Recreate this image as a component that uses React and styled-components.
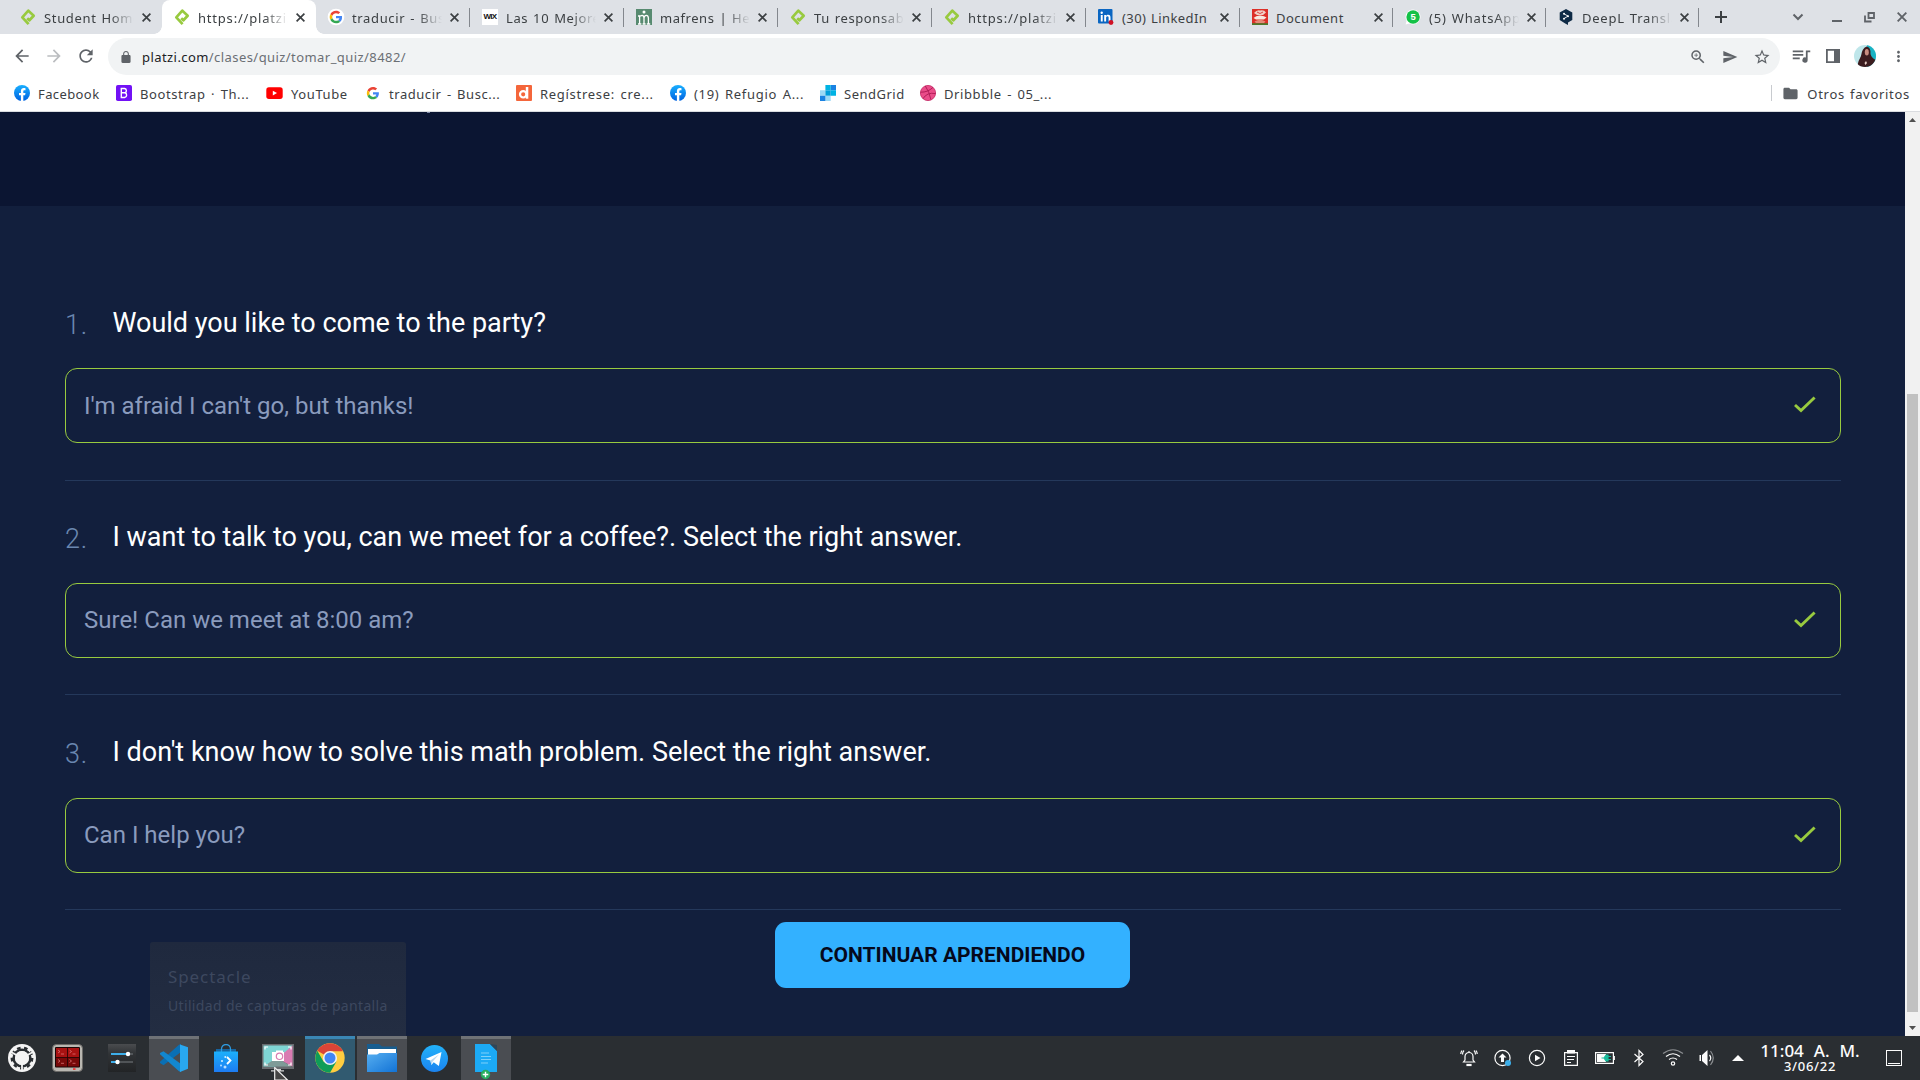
import React from "react";
import styled, { createGlobalStyle, css } from "styled-components";

const UI = '"Noto Sans", "Open Sans", sans-serif';

const Global = createGlobalStyle`
  * { box-sizing: border-box; }
  html, body { margin: 0; padding: 0; background: #121f3d; overflow: hidden; }
  body { font-family: Roboto, sans-serif; }
  svg { display: block; flex: none; }
  button { font: inherit; border: 0; padding: 0; background: none; color: inherit; }
`;

const Screen = styled.div`
  width: 1920px;
  height: 1080px;
  display: flex;
  flex-direction: column;
  overflow: hidden;
`;

/* ---------- browser chrome ---------- */
const TabStrip = styled.header`
  height: 34px;
  flex: none;
  background: #dee1e6;
  display: flex;
  padding-left: 8px;
  color: #3c4043;
`;

const Tab = styled.div`
  width: ${(p) => p.$w}px;
  height: 34px;
  flex: none;
  display: flex;
  align-items: center;
  padding: 0 0 0 12px;
  position: relative;
  font: 13px/20px ${UI};
  ${(p) => p.$line && css`
    &::after {
      content: "";
      position: absolute;
      right: 0;
      top: 8px;
      width: 1px;
      height: 19px;
      background: #83878d;
    }
  `}
  ${(p) => p.$active && css`
    background: #fff;
    border-radius: 8px 8px 0 0;
    &::before, &::after {
      content: "";
      position: absolute;
      bottom: 0;
      width: 8px;
      height: 8px;
    }
    &::before { left: -8px; background: radial-gradient(circle at 0 0, transparent 7.5px, #fff 8px); }
    &::after { right: -8px; background: radial-gradient(circle at 100% 0, transparent 7.5px, #fff 8px); }
  `}
`;

const TabTitle = styled.span`
  width: 90px;
  margin: 1px 0 0 8px;
  overflow: hidden;
  white-space: nowrap;
  letter-spacing: ${(p) => p.$ls}px;
  word-spacing: 1px;
  mask-image: ${(p) => (p.$fade ? "linear-gradient(90deg, #000 66px, transparent 90px)" : "none")};
`;

const TabClose = styled.button`
  width: 16px;
  height: 16px;
  margin-left: 4px;
  display: grid;
  place-items: center;
`;

const NewTab = styled.button`
  width: 44px;
  display: grid;
  place-items: center;
`;

const WindowButtons = styled.div`
  margin-left: auto;
  display: flex;
  align-items: center;
  padding-right: 13px;
  gap: 22px;
  color: #5f6368;
`;

const ChevronSlot = styled.div`
  padding-right: 6px;
`;

const Toolbar = styled.div`
  height: 44px;
  flex: none;
  background: #fff;
  display: flex;
  align-items: center;
  padding: 0 0 0 12px;
  color: #5f6368;
`;

const NavButtons = styled.div`
  width: 96px;
  display: flex;
  gap: 12px;
`;

const Address = styled.div`
  width: 1672px;
  height: 37px;
  border-radius: 19px;
  background: #f1f3f4;
  display: flex;
  align-items: center;
  padding: 0 9px 0 11px;
  margin-top: 1px;
`;

const Url = styled.span`
  font: 13px/20px ${UI};
  letter-spacing: 0.43px;
  margin: 1px auto 0 9px;
  color: #6b6f74;
  b { font-weight: 400; color: #202124; }
`;

const AddressIcons = styled.div`
  display: flex;
  align-items: center;
  gap: 15px;
`;

const ToolbarIcons = styled.div`
  margin-left: 11px;
  display: flex;
  align-items: center;
  gap: 14px;
`;

const Bookmarks = styled.nav`
  height: 34px;
  flex: none;
  background: #fff;
  border-bottom: 1px solid #dadce0;
  display: flex;
  align-items: center;
  padding: 0 10px 3px 14px;
  font: 13px/20px ${UI};
  color: #3c4043;
`;

const Bookmark = styled.a`
  width: ${(p) => p.$w}px;
  flex: none;
  display: flex;
  align-items: center;
  gap: 8px;
  white-space: nowrap;
  span { letter-spacing: ${(p) => p.$ls}px; word-spacing: 1.5px; padding-top: 2px; }
`;

const OtherBookmarks = styled.a`
  margin-left: auto;
  height: 16px;
  border-left: 1px solid #c8cbcf;
  padding-left: 10px;
  display: flex;
  align-items: center;
  gap: 8px;
  letter-spacing: 0.7px;
  word-spacing: 1px;
  white-space: nowrap;
  span { padding-top: 2px; }
`;

/* ---------- page ---------- */
const Viewport = styled.div`
  height: 924px;
  flex: none;
  display: flex;
`;

const Page = styled.main`
  width: 1905px;
  background: #121f3d;
  position: relative;
`;

const Hero = styled.div`
  height: 94px;
  background: #0b1532;
  padding-left: 427px;
  &::before {
    content: "";
    display: block;
    width: 3px;
    height: 1px;
    background: #7f8aa8;
  }
`;

const Questions = styled.section`
  padding: 83.4px 64px 0 65px;
`;

const Question = styled.article`
  height: 214.6px;
`;

const QuestionHead = styled.div`
  display: flex;
  height: 79px;
  padding-top: 15.5px;
`;

const Num = styled.span`
  width: 47.500px;
  padding-top: 2px;
  font: 300 27px/36px Roboto, sans-serif;
  letter-spacing: 0.7px;
  color: #6a87b0;
`;

const QuestionTitle = styled.h2`
  margin: 0;
  font: 400 27px/36px Roboto, sans-serif;
  letter-spacing: -0.01px;
  color: #fff;
`;

const Answer = styled.div`
  height: 75px;
  border: 1px solid #98ca3f;
  border-radius: 12px;
  display: flex;
  align-items: center;
  justify-content: space-between;
  padding: 0 24px 0 18px;
  font: 400 24px/32px Roboto, sans-serif;
  color: #8a9bbd;
  svg { margin-bottom: 2px; }
`;

const Divider = styled.div`
  height: 1px;
  margin-top: 36.300px;
  background: #24385b;
`;

const Continue = styled.button`
  display: block;
  width: 355px;
  height: 66px;
  margin: -11px 0 0 710px;
  border-radius: 11px;
  background: #33b1ff;
  color: #05091c;
  font: 700 21px/66px Roboto, sans-serif;
  text-align: center;
`;

const Tooltip = styled.aside`
  position: absolute;
  left: 150px;
  bottom: 0;
  width: 256px;
  height: 94px;
  border-radius: 3px 3px 0 0;
  padding: 23px 0 0 18px;
  background: linear-gradient(#1f293e, #232d42);
  color: #3d485f;
  font-family: ${UI};
  strong { display: block; font-weight: 400; font-size: 17px; line-height: 24px; letter-spacing: 0.9px; }
  span { display: block; font-size: 14px; line-height: 20px; margin-top: 7px; letter-spacing: 0.34px; white-space: nowrap; }
`;

const Scrollbar = styled.div`
  width: 15px;
  background: #f1f1f1;
  display: flex;
  flex-direction: column;
  align-items: center;
  justify-content: space-between;
  padding: 6px 0 6px;
`;

const Thumb = styled.div`
  width: 11px;
  height: 618px;
  margin: 272px 0 auto;
  background: #c1c1c1;
`;

/* ---------- desktop panel ---------- */
const Panel = styled.footer`
  height: 44px;
  flex: none;
  background: #2a2e32;
  display: flex;
  color: #fcfcfc;
`;

const Launchers = styled.div`
  display: flex;
  width: 149px;
  align-items: center;
  padding-left: 8px;
`;

const LauncherSlot = styled.div`
  width: ${(p) => p.$w}px;
`;

const Tasks = styled.div`
  display: flex;
  gap: 2px;
`;

const Task = styled.div`
  width: 50px;
  height: 44px;
  display: grid;
  place-items: center;
  border-top: 3px solid ${(p) => (p.$state === "active" ? "#3a86b4" : p.$state === "open" ? "#6f7276" : "transparent")};
  background: ${(p) => (p.$state === "active" ? "#315a70" : p.$state === "open" ? "#4a4d52" : "transparent")};
  padding-bottom: 3px;
`;

const Tray = styled.div`
  margin-left: auto;
  display: flex;
  align-items: center;
`;

const TrayIcon = styled.div`
  width: ${(p) => p.$w || 34}px;
  display: grid;
  place-items: center;
`;

const Clock = styled.div`
  width: 116px;
  height: 44px;
  padding-top: 4px;
  text-align: center;
  font: 500 17px/22px ${UI};
  word-spacing: 5.5px;
  white-space: pre;
`;

const ClockDate = styled.div`
  font-size: 13px;
  line-height: 9px;
  letter-spacing: 0.7px;
`;

const ShowDesktop = styled.div`
  width: 16px;
  height: 16px;
  margin: 0 18px 0 18px;
  border: 1px solid #fcfcfc;
  display: flex;
  align-items: flex-end;
  padding: 1px;
  &::after { content: ""; width: 100%; height: 1px; background: #fcfcfc; }
`;

/* ---------- icons ---------- */
const Platzi = () => (
  <svg width="16" height="18" viewBox="0 0 16 18" fill="none" stroke="#98ca3f" strokeWidth="2.700" strokeLinejoin="round">
    <path d="M8.600 16.200L2.300 9.300 8.300 2.600 13.700 7.800 9.400 12.300 7.200 10.200" />
  </svg>
);
const Google = ({ s = 16, plate }) => (
  <svg width={s} height={s} viewBox="0 0 48 48" overflow="visible">
    {plate && <circle cx="24" cy="24" r="25" fill="#fff" />}
    <g transform={plate ? "translate(5 5) scale(.79)" : "translate(5.500 6) scale(.77)"}>
      <path fill="#EA4335" d="M24 9.5c3.54 0 6.71 1.22 9.21 3.6l6.85-6.85C35.9 2.38 30.47 0 24 0 14.62 0 6.51 5.38 2.56 13.22l7.98 6.19C12.43 13.72 17.74 9.5 24 9.5z" />
      <path fill="#4285F4" d="M46.98 24.55c0-1.57-.15-3.09-.38-4.55H24v9.02h12.94c-.58 2.96-2.26 5.48-4.78 7.18l7.73 6c4.51-4.18 7.09-10.36 7.09-17.65z" />
      <path fill="#FBBC05" d="M10.53 28.59c-.48-1.45-.76-2.99-.76-4.59s.27-3.14.76-4.59l-7.98-6.19C.92 16.46 0 20.12 0 24s.92 7.54 2.56 10.78l7.97-6.19z" />
      <path fill="#34A853" d="M24 48c6.48 0 11.93-2.13 15.89-5.81l-7.73-6c-2.15 1.45-4.92 2.3-8.16 2.3-6.26 0-11.57-4.22-13.47-9.91l-7.98 6.19C6.51 42.62 14.62 48 24 48z" />
    </g>
  </svg>
);
const WixBox = styled.span`
  width: 16px;
  height: 16px;
  background: #fff;
  color: #111;
  font: 700 8px/16px "Liberation Sans", sans-serif;
  letter-spacing: -0.7px;
  text-align: center;
`;
const Mafrens = () => (
  <svg width="16" height="16" viewBox="0 0 16 16">
    <rect width="16" height="16" fill="#578a70" />
    <circle cx="8" cy="3" r="1.5" fill="#fff" />
    <path d="M2 15h3.400M6.600 15h3M10.800 15h3.400M3.600 15V7M2 7h2l2-.6Q8 6.600 8 9v6M8 9q.5-2.600 2.300-2.600T12.400 9v6" fill="none" stroke="#fff" strokeWidth="1.300" />
  </svg>
);
const LinkedIn = () => (
  <svg width="16" height="16" viewBox="0 0 16 16">
    <rect width="14.5" height="14.5" rx="1" fill="#0a66c2" />
    <circle cx="3.7" cy="3.8" r="1.2" fill="#fff" />
    <path d="M2.800 6h1.900v6.400H2.800zM6.200 6H8v.9c.4-.7 1.200-1.100 2.100-1.100 1.900 0 2.400 1.200 2.400 2.900v3.700h-1.900V9c0-.9-.1-1.700-1.100-1.700S8.100 8 8.100 9v3.400H6.200z" fill="#fff" />
    <circle cx="13" cy="13.500" r="2.400" fill="#d11124" />
  </svg>
);
const DocumentFav = () => (
  <svg width="16" height="16" viewBox="0 0 16 16">
    <rect width="16" height="16" fill="#dc2f28" />
    <path d="M2 4q3-3.500 6-2.500 4-1 6 2L11 6H5z" fill="#f0cfc4" />
    <path d="M5 3l3 1.500L11 3" stroke="#d44" fill="none" />
    <path d="M1.500 9q3-3 7-2.500t6 2L12 10.500H4z" fill="#f7e9e0" />
    <path d="M2.500 12.500q5.500-3.500 11 0L12 14H4z" fill="#e58a78" />
    <path d="M0 14.200h16V16H0z" fill="#4d7a2c" />
  </svg>
);
const WhatsApp = () => (
  <svg width="16" height="16" viewBox="0 0 16 16">
    <path d="M8 .5a7.500 7.500 0 1 1-3.600 14.100L.6 15.500l1-3.700A7.500 7.500 0 0 1 8 .5z" fill="#fff" />
    <circle cx="8.100" cy="8" r="6.700" fill="#13c147" />
    <text x="8.100" y="11.400" fontSize="9.500" fontWeight="700" fill="#fff" textAnchor="middle" fontFamily="Liberation Sans, sans-serif">5</text>
  </svg>
);
const DeepL = () => (
  <svg width="16" height="16" viewBox="0 0 16 16">
    <path d="M8 0l6.300 3.500v7.600L10 13.600V16l-2.800-1.600L1.700 11.100V3.500z" fill="#0f2b46" />
    <path d="M6 4.800l4 2.300-4 2.500" fill="none" stroke="#fff" strokeWidth=".9" />
    <circle cx="6" cy="4.800" r="1" fill="#fff" /><circle cx="10" cy="7.200" r="1" fill="#fff" /><circle cx="6" cy="9.700" r="1" fill="#fff" />
  </svg>
);
const Facebook = () => (
  <svg width="16" height="16" viewBox="0 0 16 16">
    <defs><linearGradient id="fbg" x2="0" y2="1"><stop stopColor="#19afff" /><stop offset="1" stopColor="#0062e0" /></linearGradient></defs>
    <circle cx="8" cy="8" r="8" fill="url(#fbg)" />
    <path d="M11.100 10.300l.4-2.300H9.300V6.500c0-.7.3-1.200 1.200-1.200h1V3.200c-.5-.1-1.100-.2-1.700-.2C8.100 3 6.900 4.100 6.900 6.100V8H5v2.300h1.900v5.600a8 8 0 0 0 2.400 0v-5.600z" fill="#fff" />
  </svg>
);
const Bootstrap = () => (
  <svg width="16" height="16" viewBox="0 0 16 16">
    <rect width="16" height="16" rx="1.800" fill="#7211f5" />
    <path d="M5.300 3.500h3.200a2.200 2.200 0 0 1 .3 4.300 2.400 2.400 0 0 1-.2 4.700H5.300zM5.300 7.800h3.500" fill="none" stroke="#fff" strokeWidth="1.400" />
  </svg>
);
const YouTube = () => (
  <svg width="17" height="16" viewBox="0 0 17 16">
    <rect x=".3" y="2.300" width="16.400" height="11.600" rx="2.600" fill="#f00" /><path d="M6.800 5.700v4.800L11 8.100z" fill="#fff" />
  </svg>
);
const Dfav = () => (
  <svg width="16" height="16" viewBox="0 0 16 16">
    <rect width="16" height="16" rx="1" fill="#f4663b" />
    <circle cx="7.200" cy="9.300" r="3.200" fill="none" stroke="#fff" strokeWidth="2.200" /><path d="M9.800 2h2.500v11.700H9.800z" fill="#fff" />
  </svg>
);
const SendGrid = () => (
  <svg width="16" height="16" viewBox="0 0 16 16">
    <path d="M0 5.300h5.400v5.400H0zM5.400 10.700h5.300V16H5.400z" fill="#9dd9f5" />
    <path d="M0 10.700h5.400V16H0zM10.700 0H16v5.300h-5.300z" fill="#1a82e2" />
    <path d="M5.400 0h5.300v5.300H5.400zM10.700 5.300H16v5.400h-5.300z" fill="#00b3e3" />
    <path d="M5.400 5.300h5.300v5.400H5.400z" fill="#009dd9" />
  </svg>
);
const Dribbble = () => (
  <svg width="16" height="16" viewBox="0 0 16 16">
    <circle cx="8" cy="8" r="7.600" fill="#ea4c89" stroke="#c32361" strokeWidth=".8" />
    <path d="M5.300 1q4 5.500 5.600 13.600M.5 7.200Q8 7.400 13 2.300M3 13.700Q7 6.900 15.600 8.600" fill="none" stroke="#b21e58" strokeWidth="1" />
  </svg>
);
const Material = ({ d, s = 20, c = "#5f6368" }) => (
  <svg width={s} height={s} viewBox="0 0 24 24" fill={c}><path d={d} /></svg>
);
const M = {
  back: "M20 11H7.830l5.590-5.590L12 4l-8 8 8 8 1.410-1.410L7.830 13H20v-2z",
  fwd: "M12 4l-1.410 1.410L16.170 11H4v2h12.170l-5.580 5.590L12 20l8-8z",
  reload: "M17.650 6.350A7.958 7.958 0 0 0 12 4c-4.420 0-7.990 3.580-7.990 8s3.570 8 7.990 8c3.730 0 6.840-2.550 7.730-6h-2.080A5.990 5.990 0 0 1 12 18c-3.310 0-6-2.690-6-6s2.690-6 6-6c1.660 0 3.140.69 4.220 1.780L13 11h7V4l-2.350 2.350z",
  lock: "M18 8h-1V6c0-2.760-2.240-5-5-5S7 3.240 7 6v2H6c-1.100 0-2 .9-2 2v10c0 1.100.9 2 2 2h12c1.100 0 2-.9 2-2V10c0-1.100-.9-2-2-2zM8.900 6c0-1.710 1.390-3.100 3.100-3.100s3.100 1.390 3.100 3.100v2H8.900V6z",
  zoom: "M15.500 14h-.79l-.28-.27A6.471 6.471 0 0 0 16 9.500 6.500 6.500 0 1 0 9.500 16c1.610 0 3.090-.59 4.230-1.570l.27.28v.79l5 4.990L20.490 19l-4.990-5zm-6 0C7.010 14 5 11.990 5 9.500S7.010 5 9.500 5 14 7.010 14 9.500 11.990 14 9.500 14zm.5-7H9v2H7v1h2v2h1v-2h2V9h-2z",
  send: "M2.010 21L23 12 2.010 3 2 10l15 2-15 2z",
  star: "M22 9.240l-7.190-.62L12 2 9.190 8.630 2 9.240l5.460 4.730L5.820 21 12 17.270 18.180 21l-1.630-7.030L22 9.240zM12 15.400l-3.760 2.270 1-4.280-3.320-2.880 4.380-.38L12 6.100l1.710 4.040 4.380.38-3.320 2.880 1 4.280L12 15.400z",
  media: "M2 5h12v2H2zM2 9h12v2H2zM2 13h8v2H2zM17 5h5v2.200h-3V16a3 3 0 1 1-2-2.800z",
  folder: "M10 4H4c-1.100 0-1.990.9-1.990 2L2 18c0 1.100.9 2 2 2h16c1.100 0 2-.9 2-2V8c0-1.100-.9-2-2-2h-8l-2-2z",
  more: "M12 8c1.100 0 2-.9 2-2s-.9-2-2-2-2 .9-2 2 .9 2 2 2zm0 2c-1.100 0-2 .9-2 2s.9 2 2 2 2-.9 2-2-.9-2-2-2zm0 6c-1.100 0-2 .9-2 2s.9 2 2 2 2-.9 2-2-.9-2-2-2z",
};
const Cross = ({ s = 9, c = "#3c4043" }) => (
  <svg width={s} height={s} viewBox="0 0 9 9" stroke={c} strokeWidth="1.700"><path d="M.6.6l7.800 7.800M8.400.6L.6 8.400" /></svg>
);
const Avatar = () => (
  <svg width="22" height="22" viewBox="0 0 22 22">
    <clipPath id="av"><circle cx="11" cy="11" r="11" /></clipPath>
    <g clipPath="url(#av)">
      <rect width="22" height="22" fill="#bfe6ea" /><rect x="13" width="9" height="22" fill="#19b3c4" />
      <path d="M3 22Q4 16 7 11 8 3 12.500 1.500 17 2 16.500 9q1 4 5.500 6v7z" fill="#3c1c1f" />
      <ellipse cx="12.800" cy="7.200" rx="2" ry="3.300" fill="#c98d80" />
      <path d="M10.500 18l1.500-2 1 2-1.500 2z" fill="#e8cfc6" />
    </g>
  </svg>
);
const Check = () => (
  <svg width="22" height="17" viewBox="0 0 22 17" fill="none" stroke="#98ca3f" strokeWidth="2.900"><path d="M1 9l6 5.600L20.600 1.500" /></svg>
);

const Kubuntu = () => (
  <svg width="28" height="28" viewBox="0 0 28 28">
    <circle cx="14" cy="14" r="14" fill="#f4f4f4" />
    <circle cx="14" cy="14" r="8.300" fill="none" stroke="#2a2e32" strokeWidth="2.600" />
    <circle cx="14" cy="14" r="10.200" fill="none" stroke="#2a2e32" strokeWidth="2.400" strokeDasharray="3.600 3.520" />
    <path d="M14 14L25 8M14 14L14 26.500M14 14L3 8" stroke="#f4f4f4" strokeWidth="1.800" />
    <circle cx="14" cy="14" r="7" fill="#f4f4f4" />
  </svg>
);
const Terminal = () => (
  <svg width="31" height="28" viewBox="0 0 31 28">
    <rect x=".5" y=".5" width="30" height="27" rx="4" fill="#b9b7b1" stroke="#6c6b68" />
    <rect x="3" y="3" width="25" height="20.500" rx="1" fill="#1c0606" />
    <path d="M4 4h11v9H4zM15.800 4H27v9H15.800z" fill="#a81212" />
    <path d="M4 13.800h11v8.700H4zM15.800 13.800H27v8.700H15.800z" fill="#780909" />
    <path d="M6 6l2 1.500L6 9m3 1h3M17.500 6l2 1.500-2 1.500m3 1h3M6 15.500L8 17l-2 1.500m3 .8h3M17.500 15.500l2 1.500-2 1.500m3 .8h3" stroke="#e58080" fill="none" strokeWidth=".7" />
    <rect x="21" y="24.300" width="2.500" height="1.500" fill="#f22" />
  </svg>
);
const Mixer = () => (
  <svg width="28" height="28" viewBox="0 0 28 28">
    <defs><linearGradient id="mx" x2="0" y2="1"><stop stopColor="#4a4c4f" /><stop offset=".35" stopColor="#303336" /><stop offset="1" stopColor="#222426" /></linearGradient></defs>
    <rect width="28" height="28" fill="url(#mx)" />
    <path d="M3 10h17M3 18h6" stroke="#3daee9" strokeWidth="1.800" /><path d="M21 10h4M11 18h14" stroke="#5e6265" strokeWidth="1.500" />
    <circle cx="20" cy="10" r="2.200" fill="#fff" /><circle cx="9.500" cy="18" r="2.200" fill="#fff" />
  </svg>
);
const VSCode = () => (
  <svg width="28" height="28" viewBox="0 0 28 28">
    <path d="M21 0v8L3.500 21.200 0 19v-1.200L19 .8z" fill="#0a6fb4" />
    <path d="M21 28v-8L3.500 7.200 0 9v1.200L19 27.300z" fill="#1287cf" />
    <path d="M20 .500L28 3.200v21.600L20 28z" fill="#29a8f0" />
  </svg>
);
const Discover = () => (
  <svg width="24" height="28" viewBox="0 0 24 28">
    <defs><linearGradient id="ds" x2="0" y2="1"><stop stopColor="#1cb0fb" /><stop offset="1" stopColor="#1d7cf3" /></linearGradient></defs>
    <path d="M2 5h20v3H2z" fill="#1765a0" />
    <path d="M7.500 9V5a4.500 4.500 0 0 1 9 0v4" fill="none" stroke="#2e9ade" strokeWidth="1.300" />
    <rect y="7.500" width="24" height="20.500" fill="url(#ds)" />
    <path d="M13 13l3.500 3.500L13 20" fill="none" stroke="#fff" strokeWidth="1.800" />
    <circle cx="8" cy="17" r="1" fill="#d9efff" /><circle cx="7" cy="21.500" r="1" fill="#b9deff" /><circle cx="11" cy="23" r="1.500" fill="#b9deff" /><circle cx="11.300" cy="13" r="1" fill="#d9efff" />
  </svg>
);
const Spectacle = () => (
  <svg width="32" height="28" viewBox="0 0 32 28">
    <rect width="32" height="25" fill="#686c70" />
    <path d="M1.500 1.500h29L13 22.500H1.500z" fill="#7fd5d4" />
    <path d="M30.500 1.500v21l-15-8z" fill="#d97bb2" /><path d="M1.500 22.500L15 13.500l14 9z" fill="#7f9b98" />
    <path d="M3 5.500V3h3M26 3h3v2.500M3 18.500V21h3M26 21h3v-2.500" stroke="#fff" strokeWidth="1.200" fill="none" />
    <path d="M10 8h4v-1.500h7V8h1v9H10z" fill="#fff" /><circle cx="17.500" cy="12.300" r="3.200" fill="#fff" stroke="#d97bb2" strokeWidth="1.200" />
    <path d="M13 25h6v1.200h3v1.300H9v-1.300h4z" fill="#d4d5d6" />
  </svg>
);
const Chrome = () => (
  <svg width="30" height="30" viewBox="0 0 48 48">
    <circle cx="24" cy="24" r="23.500" fill="#ffcd40" />
    <path d="M24 24L3.650 12.250A23.500 23.500 0 0 1 44.350 12.250L44.350 13H24z" fill="#db4437" />
    <path d="M3.650 12.250A23.500 23.500 0 0 0 24 47.500l10.200-17.700L24 24 13.800 29.900z" fill="#0f9d58" />
    <circle cx="24" cy="24" r="11.300" fill="#f1f1f1" /><circle cx="24" cy="24" r="8.800" fill="#4285f4" />
  </svg>
);
const FolderBig = () => (
  <svg width="30" height="28" viewBox="0 0 30 28">
    <defs><linearGradient id="fo" x2="1" y2="1"><stop stopColor="#56aef0" /><stop offset="1" stopColor="#1273d6" /></linearGradient></defs>
    <path d="M0 0h12l3 2.500h15V12H0z" fill="#175d8f" /><path d="M1 5h28v8H1z" fill="#fff" />
    <path d="M0 10.500h10l2.500-1.500H30v19H0z" fill="url(#fo)" />
  </svg>
);
const Telegram = () => (
  <svg width="27" height="27" viewBox="0 0 27 27">
    <defs><linearGradient id="tg" x2="0" y2="1"><stop stopColor="#22b2fa" /><stop offset="1" stopColor="#1b83ef" /></linearGradient></defs>
    <circle cx="13.500" cy="13.500" r="13.500" fill="url(#tg)" />
    <path d="M4.500 14L20.500 7l-2.600 14-5.200-3.800-2.300 2.800-1-4.500z" fill="#fff" /><path d="M9.400 15.500L18 9.500l-6.500 7.300-1.100 3.200z" fill="#b9d6ee" />
  </svg>
);
const DocNew = () => (
  <svg width="22" height="28" viewBox="0 0 22 28" overflow="visible">
    <path d="M0 0h15l7 7v21H0z" fill="#1caaf5" /><path d="M15 0l7 7V1z" fill="#2f4658" />
    <path d="M6 9h8M6 12.500h10M6 15.500h10M6 19h7" stroke="#7dd0fa" strokeWidth="1" />
    <circle cx="10.500" cy="30.500" r="4.700" fill="#27ae60" /><path d="M10.500 27.700v5.600M7.700 30.500h5.600" stroke="#fff" strokeWidth="1.400" />
  </svg>
);

const Line = ({ w = 18, h = 18, children }) => (
  <svg width={w} height={h} viewBox={`0 0 ${w} ${h}`} fill="none" stroke="#fcfcfc" strokeWidth="1.200">{children}</svg>
);
const trayIcons = [
  <Line><path d="M3.500 13h11l-1.500-2V7.500a4 4 0 0 0-8 0V11zM9 3.500V2M4 1.500Q2.500 3 2.500 5.500M14 1.500q1.500 1.500 1.500 4M2 1.500Q.8 3 .8 5M16 1.500q1.200 1.500 1.200 3.500" /><path d="M7 15.500h4v1H7z" fill="#fcfcfc" /></Line>,
  <Line><circle cx="8.500" cy="9" r="7.600" /><path d="M8.500 4.500l4 4H10v4.500H7V8.500H4.500z" fill="#fcfcfc" stroke="none" /><circle cx="14" cy="14" r="3" fill="#3daee9" stroke="none" /></Line>,
  <Line><circle cx="9" cy="9" r="7.600" /><path d="M7 5.800v6.400L12.500 9z" fill="#fcfcfc" stroke="none" /></Line>,
  <Line><path d="M2.600 3.600h12.800v12.800H2.600zM5 7.500h8M5 10.500h7M5 13.500h4" /><path d="M5 1h8v3.500H5z" fill="#fcfcfc" stroke="none" /></Line>,
  <Line w={20}><path d="M.6 3.600h17.800v10.800H.6zM19.300 7v4" /><path d="M2 5h9v8H2z" fill="#fcfcfc" stroke="none" /><path d="M6.500 9H9l2-3h2v6h-2L9 9M13 7.500h3M13 10.500h3" stroke="#1abc9c" fill="#1abc9c" /></Line>,
  <Line><path d="M4.500 5l8.500 7.500L9 16.500v-15L13 5.500 4.500 13" /></Line>,
  <Line w={22}><circle cx="11" cy="14.500" r="1.700" /><path d="M7 10.500q4-3 8 0M4 7.500q7-5.500 14 0" /><path d="M1 4.500q10-7.500 20 0" stroke="#8a8d90" /></Line>,
  <Line><path d="M1.500 6H3v6H1.500zM4 6L9.500 1v16L4 12z" fill="#fcfcfc" stroke="none" /><path d="M11.500 6q2.500 3 0 6" /><path d="M12.500 2q5.500 7 0 14" stroke="#8a8d90" /></Line>,
];

/* ---------- data ---------- */
const tabs = [
  { icon: <Platzi />, title: "Student Home", ls: 0.65, fade: true },
  { icon: <Platzi />, title: "https://platzi.com", ls: 0.8, fade: true, active: true },
  { icon: <Google plate />, title: "traducir - Buscar", ls: 0.65, fade: true, line: true },
  { icon: <WixBox>WIX</WixBox>, title: "Las 10 Mejores", ls: 0.6, fade: true, line: true },
  { icon: <Mafrens />, title: "mafrens | Health", ls: 0.55, fade: true, line: true },
  { icon: <Platzi />, title: "Tu responsabilidad", ls: 0.6, fade: true, line: true },
  { icon: <Platzi />, title: "https://platzi.com", ls: 0.8, fade: true, line: true },
  { icon: <LinkedIn />, title: "(30) LinkedIn", ls: 0.4, line: true },
  { icon: <DocumentFav />, title: "Document", ls: 0.5, line: true, w: 153 },
  { icon: <WhatsApp />, title: "(5) WhatsApp", ls: 0.8, fade: true, line: true, w: 153 },
  { icon: <DeepL />, title: "DeepL Translate", ls: 0.75, fade: true, line: true, w: 153 },
];

const bookmarks = [
  { icon: <Facebook />, label: "Facebook", w: 102, ls: 0.4 },
  { icon: <Bootstrap />, label: "Bootstrap · Th...", w: 150, ls: 0.6 },
  { icon: <YouTube />, label: "YouTube", w: 99, ls: 0.6 },
  { icon: <Google />, label: "traducir - Busc...", w: 151, ls: 0.55 },
  { icon: <Dfav />, label: "Regístrese: cre...", w: 154, ls: 0.7 },
  { icon: <Facebook />, label: "(19) Refugio A...", w: 150, ls: 0.7 },
  { icon: <SendGrid />, label: "SendGrid", w: 100, ls: 0.5 },
  { icon: <Dribbble />, label: "Dribbble - 05_...", w: 150, ls: 0.6 },
];

const questions = [
  { title: "Would you like to come to the party?", answer: "I'm afraid I can't go, but thanks!" },
  { title: "I want to talk to you, can we meet for a coffee?. Select the right answer.", answer: "Sure! Can we meet at 8:00 am?" },
  { title: "I don't know how to solve this math problem. Select the right answer.", answer: "Can I help you?" },
];

const tasks = [
  { icon: <VSCode />, state: "open" },
  { icon: <Discover /> },
  { icon: <Spectacle /> },
  { icon: <Chrome />, state: "active" },
  { icon: <FolderBig />, state: "open" },
  { icon: <Telegram /> },
  { icon: <DocNew />, state: "open" },
];

const Cursor = styled.svg`
  position: absolute;
  left: 274px;
  top: 1067px;
`;

export default function App() {
  return (
    <Screen>
      <Global />
      <TabStrip>
        {tabs.map((t, i) => (
          <Tab key={i} $active={t.active} $line={t.line} $w={t.w || 154}>
            {t.icon}
            <TabTitle $ls={t.ls} $fade={t.fade}>{t.title}</TabTitle>
            <TabClose><Cross /></TabClose>
          </Tab>
        ))}
        <NewTab><svg width="12" height="12" viewBox="0 0 12 12" stroke="#3c4043" strokeWidth="2"><path d="M6 0v12M0 6h12" /></svg></NewTab>
        <WindowButtons>
          <ChevronSlot>
            <svg width="12" height="8" viewBox="0 0 12 8" fill="none" stroke="#5f6368" strokeWidth="2"><path d="M1.500 1.500L6 6l4.500-4.500" /></svg>
          </ChevronSlot>
          <svg width="10" height="10" viewBox="0 0 10 10"><path d="M0 8h10v2H0z" fill="#5f6368" /></svg>
          <svg width="11" height="11" viewBox="0 0 11 11" fill="none" stroke="#5f6368" strokeWidth="1.800"><path d="M4.500 1H10v5H4.500zM1 3.500v6h6.500" /></svg>
          <Cross s={10} c="#5f6368" />
        </WindowButtons>
      </TabStrip>

      <Toolbar>
        <NavButtons>
          <Material d={M.back} /><Material d={M.fwd} c="#bbbdc0" /><Material d={M.reload} />
        </NavButtons>
        <Address>
          <svg width="14" height="12" viewBox="4 1 16 21" fill="#5f6368"><path d={M.lock} /></svg>
          <Url><b>platzi.com</b>/clases/quiz/tomar_quiz/8482/</Url>
          <AddressIcons>
            <Material d={M.zoom} s={18} /><Material d={M.send} s={16} /><Material d={M.star} s={18} />
          </AddressIcons>
        </Address>
        <ToolbarIcons>
          <Material d={M.media} s={21} />
          <svg width="14" height="14" viewBox="0 0 14 14" fill="#5f6368"><path d="M0 0h14v14H0zM1.800 1.800v10.400h6.200V1.800z" fillRule="evenodd" /></svg>
          <Avatar />
          <Material d={M.more} s={17} />
        </ToolbarIcons>
      </Toolbar>

      <Bookmarks>
        {bookmarks.map((b) => (
          <Bookmark key={b.label} $w={b.w} $ls={b.ls}>{b.icon}<span>{b.label}</span></Bookmark>
        ))}
        <OtherBookmarks><Material d={M.folder} s={17} /><span>Otros favoritos</span></OtherBookmarks>
      </Bookmarks>

      <Viewport>
        <Page>
          <Hero />
          <Questions>
            {questions.map((q, i) => (
              <Question key={i}>
                <QuestionHead><Num>{i + 1}.</Num><QuestionTitle>{q.title}</QuestionTitle></QuestionHead>
                <Answer>{q.answer}<Check /></Answer>
                <Divider />
              </Question>
            ))}
            <Continue>CONTINUAR APRENDIENDO</Continue>
          </Questions>
          <Tooltip><strong>Spectacle</strong><span>Utilidad de capturas de pantalla</span></Tooltip>
        </Page>
        <Scrollbar>
          <svg width="7" height="4" viewBox="0 0 7 4"><path d="M0 4L3.500 0 7 4z" fill="#505050" /></svg>
          <Thumb />
          <svg width="7" height="4" viewBox="0 0 7 4"><path d="M0 0l3.500 4L7 0z" fill="#505050" /></svg>
        </Scrollbar>
      </Viewport>

      <Panel>
        <Launchers>
          <LauncherSlot $w={44}><Kubuntu /></LauncherSlot>
          <LauncherSlot $w={56}><Terminal /></LauncherSlot>
          <LauncherSlot $w={41}><Mixer /></LauncherSlot>
        </Launchers>
        <Tasks>{tasks.map((t, i) => <Task key={i} $state={t.state}>{t.icon}</Task>)}</Tasks>
        <Tray>
          {trayIcons.map((ic, i) => <TrayIcon key={i}>{ic}</TrayIcon>)}
          <TrayIcon $w={28}><svg width="12" height="6" viewBox="0 0 12 6"><path d="M0 6l6-6 6 6z" fill="#fcfcfc" /></svg></TrayIcon>
          <Clock><div>11:04 A. M.</div><ClockDate>3/06/22</ClockDate></Clock>
          <ShowDesktop />
        </Tray>
      </Panel>
      <Cursor width="16" height="13" viewBox="0 0 16 13"><path d="M.7.500V13H13.500z" fill="#444" stroke="#eee" strokeWidth="1.200" /></Cursor>
    </Screen>
  );
}
